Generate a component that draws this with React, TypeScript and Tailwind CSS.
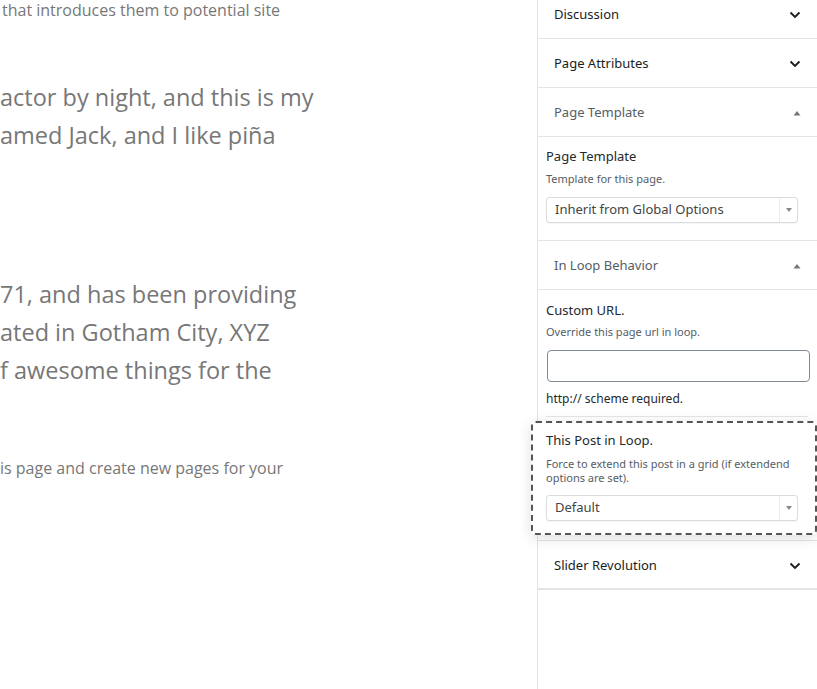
import React from "react";

const SB = { fontFamily: '"Noto Sans", "Open Sans", Arial, sans-serif' };
const LF = { fontFamily: '"Open Sans", "Noto Sans", Arial, sans-serif' };

function ChevronDown() {
  return (
    <svg width="14" height="14" viewBox="0 0 14 14" className="block">
      <polyline points="2.5,4.5 7,9 11.5,4.5" fill="none" stroke="#1e1e1e" strokeWidth="1.9" />
    </svg>
  );
}

function TriUp() {
  return (
    <svg width="10" height="8" viewBox="0 0 10 8" className="block">
      <polygon points="1.5,6.5 5,2 8.5,6.5" fill="#777" />
    </svg>
  );
}

function Header({ title, open, gray }: { title: string; open?: boolean; gray?: boolean }) {
  return (
    <div className="h-[49px] border-b border-[#e2e4e7] flex items-center justify-between pl-[16px] pr-[15px] pt-[2px]">
      <span className={`text-[13px] ${gray ? "text-[#555d66]" : "text-[#191e23]"}`}>{title}</span>
      {open ? <TriUp /> : <ChevronDown />}
    </div>
  );
}

function Select({ value, width }: { value: string; width: string }) {
  return (
    <div className={`${width} h-[26px] border border-[#dcdcdc] rounded-[3px] flex items-center bg-white shadow-[0_1px_1px_rgba(0,0,0,0.04)]`}>
      <span className="flex-1 pl-[8px] text-[13px] text-[#444]">{value}</span>
      <span className="w-[18px] h-full border-l border-[#ececec] flex items-center justify-center">
        <svg width="6" height="4" viewBox="0 0 6 4" className="block">
          <polygon points="0,0 6,0 3,4" fill="#888" />
        </svg>
      </span>
    </div>
  );
}

export default function App() {
  return (
    <div className="w-[817px] h-[689px] overflow-hidden bg-white flex">
      <div className="w-[537px] overflow-hidden text-[#777]" style={LF}>
        <div className="mt-[-2px] h-[24px] leading-[24px] text-[16px] pl-[2px] whitespace-nowrap">that introduces them to potential site</div>
        <div className="mt-[56px] text-[23.5px] leading-[38px] whitespace-nowrap">
          <div>actor by night, and this is my</div>
          <div>amed Jack, and I like piña</div>
        </div>
        <div className="mt-[121px] text-[23.5px] leading-[38px] whitespace-nowrap">
          <div>71, and has been providing</div>
          <div>ated in Gotham City, XYZ</div>
          <div>f awesome things for the</div>
        </div>
        <div className="mt-[67px] h-[24px] leading-[24px] text-[16px] whitespace-nowrap">is page and create new pages for your</div>
      </div>
      <div className="w-[280px] h-[689px] border-l border-[#e2e4e7] bg-white" style={SB}>
        <div className="mt-[-10px]">
          <Header title="Discussion" />
          <Header title="Page Attributes" />
          <Header title="Page Template" open gray />
          <div className="border-b border-[#e2e4e7] pl-[8px] pt-[10px] pb-[17px]">
            <div className="text-[13px] leading-[18px] text-[#23282d]">Page Template</div>
            <div className="mt-[6px] text-[11px] leading-[16px] text-[#555d66]">Template for this page.</div>
            <div className="mt-[10px]">
              <Select value="Inherit from Global Options" width="w-[252px]" />
            </div>
          </div>
          <Header title="In Loop Behavior" open gray />
          <div className="pl-[8px] pt-[11px]">
            <div className="text-[13px] leading-[18px] text-[#23282d]">Custom URL.</div>
            <div className="mt-[5px] text-[11px] leading-[16px] text-[#555d66]">Override this page url in loop.</div>
            <div className="mt-[10px] ml-[1px] w-[263px] h-[32px] border border-[#7e8993] rounded-[4px] bg-white" />
            <div className="mt-[9px] text-[12px] leading-[16px] text-[#23282d]">http:// scheme required.</div>
            <div className="mt-[9px] w-[262px] h-px bg-[#e6e6e6]" />
          </div>
          <div className="mt-[4px] ml-[-7px] w-[286px] border-2 border-dashed border-[#555] rounded-[5px] bg-white shadow-[0_3px_14px_rgba(0,0,0,0.13)] pl-[13px] pt-[8px] pb-[12px] relative">
            <div className="text-[13px] leading-[18px] text-[#23282d]">This Post in Loop.</div>
            <div className="mt-[8px] text-[11px] leading-[14px] text-[#555d66] w-[260px]">Force to extend this post in a grid (if extendend options are set).</div>
            <div className="mt-[10px]">
              <Select value="Default" width="w-[252px]" />
            </div>
          </div>
          <div className="mt-[5px] border-t border-[#e2e4e7]">
            <div className="h-[49px] border-b-2 border-[#e2e4e7] flex items-center justify-between pl-[16px] pr-[15px] pt-[2px]">
              <span className="text-[13px] text-[#191e23]">Slider Revolution</span>
              <ChevronDown />
            </div>
          </div>
        </div>
      </div>
    </div>
  );
}
